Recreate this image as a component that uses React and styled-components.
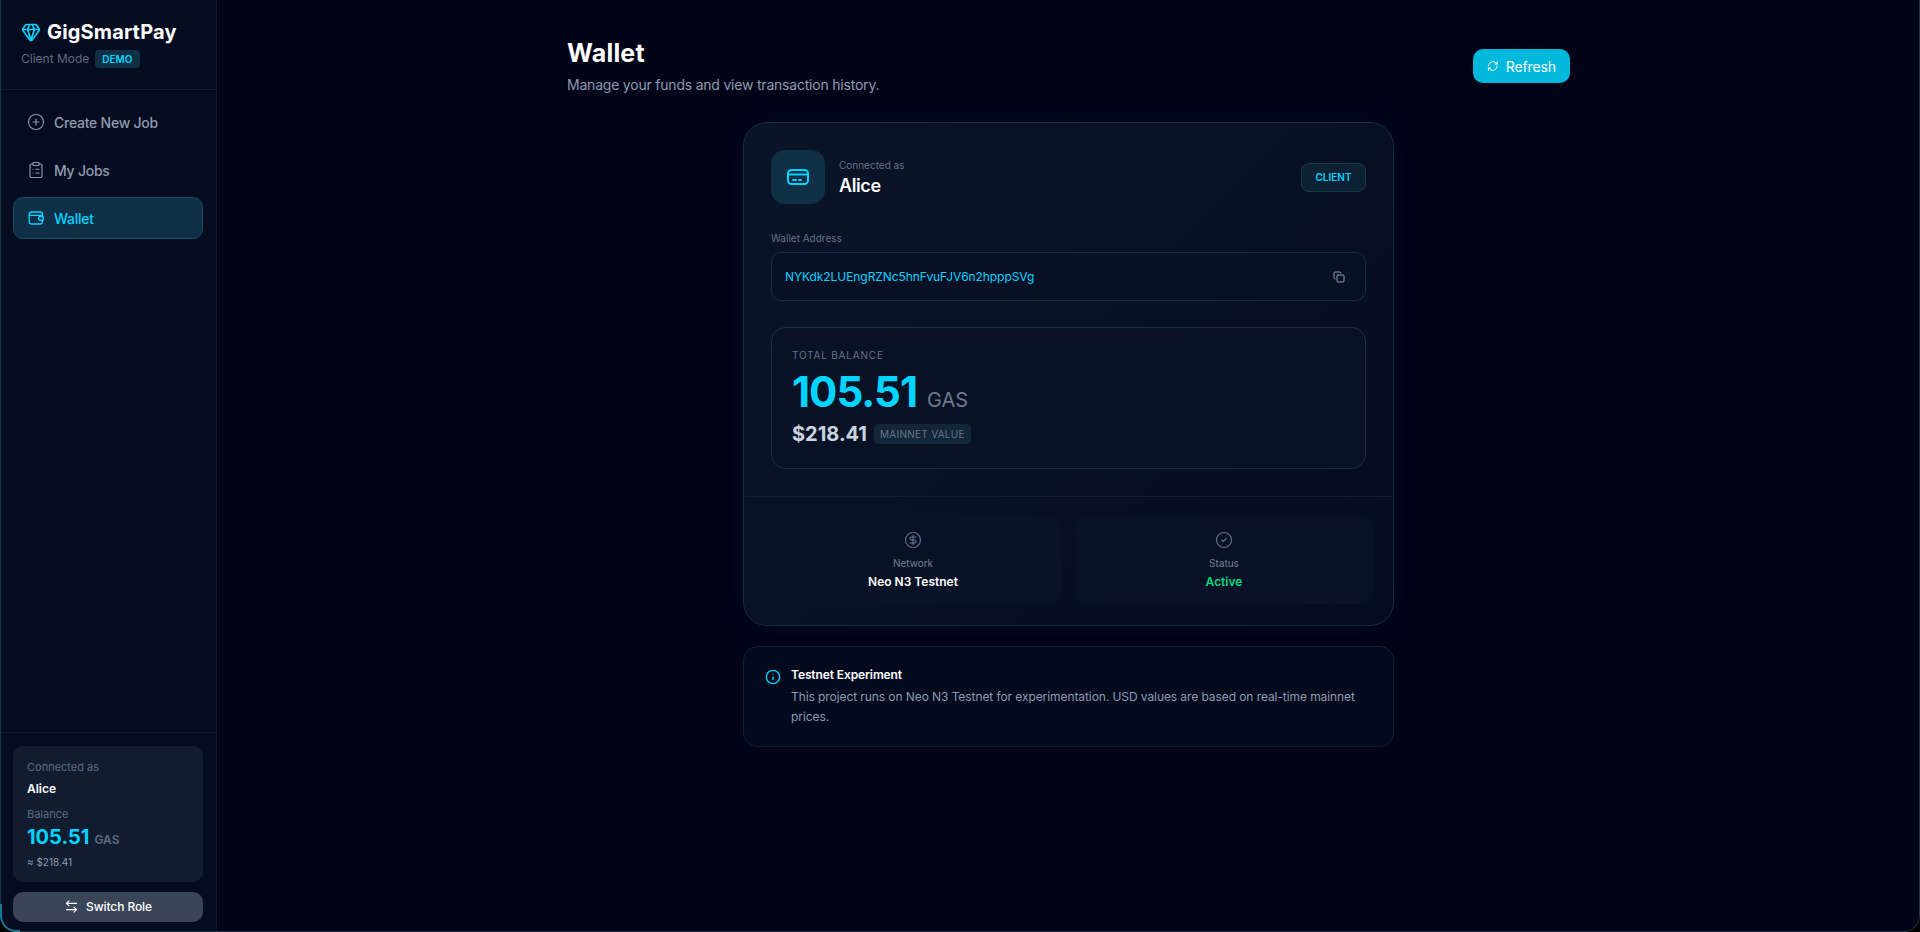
import React from "react";
import styled, { createGlobalStyle } from "styled-components";
import {
  ArrowLeftRight,
  CircleCheck,
  CircleDollarSign,
  CirclePlus,
  ClipboardList,
  Copy,
  Gem,
  Info,
  RefreshCw,
} from "lucide-react";

const GlobalStyle = createGlobalStyle`
  html, body {
    margin: 0;
    background: #000;
  }
  * {
    box-sizing: border-box;
  }
  body {
    font-family: Inter, "Liberation Sans", sans-serif;
    -webkit-font-smoothing: antialiased;
  }
`;

const Frame = styled.div`
  display: flex;
  position: relative;
  height: 932px;
  overflow: hidden;
  background: #010316;
  border-radius: 0 0 16px 16px;
  &::after {
    content: "";
    position: absolute;
    inset: 0;
    border: 1px solid #1b3347;
    border-top: 0;
    border-radius: 0 0 16px 16px;
    pointer-events: none;
  }
  &::before {
    content: "";
    position: absolute;
    left: 0;
    bottom: 0;
    width: 18px;
    height: 26px;
    border-left: 2px solid #0e7f96;
    border-bottom: 2px solid #0e7f96;
    border-bottom-left-radius: 16px;
    z-index: 1;
    pointer-events: none;
  }
`;

const Sidebar = styled.aside`
  display: flex;
  flex-direction: column;
  flex: 0 0 217px;
  background: #060c1f;
  border-right: 1px solid #0f1a2e;
`;

const Brand = styled.div`
  height: 90px;
  padding: 20px 20px 0 21px;
  border-bottom: 1px solid #121d30;
`;

const Logo = styled.div`
  display: flex;
  align-items: center;
  gap: 6px;
  color: #fff;
  font-size: 20px;
  line-height: 24px;
  font-weight: 700;
  letter-spacing: 0.15px;
  svg {
    color: #00d4ff;
  }
`;

const ModeRow = styled.div`
  display: flex;
  align-items: center;
  gap: 6px;
  margin-top: 6px;
  color: #5d6b80;
  font-size: 12px;
  line-height: 18px;
`;

const DemoTag = styled.span`
  padding: 0 7px;
  height: 18px;
  border-radius: 4px;
  background: #0f3045;
  color: #00d4ff;
  font-size: 10px;
  line-height: 18px;
  font-weight: 600;
`;

const Nav = styled.nav`
  display: flex;
  flex-direction: column;
  gap: 6px;
  flex: 1;
  padding: 11px 13px;
`;

const NavItem = styled.a`
  display: flex;
  align-items: center;
  gap: 9px;
  height: 42px;
  padding: 0 13px;
  border-radius: 10px;
  border: 1px solid ${(p) => (p.$active ? "#135067" : "transparent")};
  background: ${(p) => (p.$active ? "#0f2f46" : "transparent")};
  color: ${(p) => (p.$active ? "#00d4ff" : "#8d9bb0")};
  font-size: 14px;
  font-weight: 500;
  letter-spacing: -0.25px;
`;

const SideFoot = styled.div`
  padding: 13px 13px 10px;
  border-top: 1px solid #121d30;
`;

const AccountCard = styled.div`
  height: 136px;
  padding: 13px 14px 0;
  border-radius: 10px;
  background: #111c30;
`;

const SmallLabel = styled.div`
  color: #5d6b80;
  font-size: 11px;
  line-height: 16px;
`;

const AccountName = styled.div`
  margin: 5px 0 8px;
  color: #fff;
  font-size: 12px;
  line-height: 18px;
  font-weight: 600;
`;

const SideBalance = styled.div`
  display: flex;
  align-items: baseline;
  gap: 5px;
  margin-top: 2px;
  color: #00d4ff;
  font-size: 20px;
  line-height: 26px;
  font-weight: 700;
`;

const SideUnit = styled.span`
  color: #5d6b80;
  font-size: 12px;
  font-weight: 600;
`;

const SideUsd = styled.div`
  margin-top: 1px;
  color: #8d9bb0;
  font-size: 10px;
  line-height: 16px;
`;

const SwitchButton = styled.button`
  display: flex;
  align-items: center;
  justify-content: center;
  gap: 7px;
  width: 100%;
  height: 30px;
  margin-top: 10px;
  padding: 0 0 1px;
  border: 0;
  border-radius: 10px;
  background: #3a4658;
  color: #fff;
  font-family: inherit;
  font-size: 12px;
  font-weight: 500;
  letter-spacing: -0.1px;
`;

const Main = styled.main`
  flex: 1;
  padding-top: 37px;
`;

const Content = styled.div`
  width: 1003px;
  margin: 0 auto;
`;

const PageHead = styled.header`
  display: flex;
  justify-content: space-between;
  align-items: center;
  margin-bottom: 27px;
`;

const PageTitle = styled.h1`
  margin: 0;
  color: #fff;
  font-size: 25px;
  line-height: 32px;
  font-weight: 700;
  letter-spacing: 0.2px;
`;

const PageSub = styled.p`
  margin: 6px 0 0;
  color: #8d9bb0;
  font-size: 14px;
  line-height: 20px;
  letter-spacing: -0.21px;
`;

const RefreshButton = styled.button`
  display: flex;
  align-items: center;
  gap: 7px;
  width: 97px;
  height: 34px;
  padding: 0 14px;
  border: 0;
  border-radius: 10px;
  background: #00b8db;
  color: #fff;
  font-family: inherit;
  font-size: 14px;
  font-weight: 400;
  letter-spacing: -0.1px;
`;

const WalletCard = styled.section`
  width: 651px;
  height: 504px;
  margin: 0 auto;
  border: 1px solid #142c40;
  border-radius: 24px;
  background: linear-gradient(135deg, #0a1428 0%, #060c20 100%);
  box-shadow: 0 0 30px rgba(0, 30, 60, 0.35);
`;

const CardBody = styled.div`
  height: 374px;
  padding: 27px 27px 0;
  border-bottom: 1px solid #101d30;
`;

const CardTop = styled.div`
  display: flex;
  align-items: center;
  justify-content: space-between;
`;

const Identity = styled.div`
  display: flex;
  align-items: center;
  gap: 14px;
`;

const IconTile = styled.div`
  display: flex;
  align-items: center;
  justify-content: center;
  width: 54px;
  height: 54px;
  border-radius: 14px;
  background: #0f3045;
  color: #00d4ff;
`;

const ConnectedLabel = styled.div`
  color: #64728a;
  font-size: 10px;
  line-height: 16px;
`;

const ConnectedName = styled.div`
  margin-top: 1px;
  color: #fff;
  font-size: 18px;
  line-height: 24px;
  font-weight: 600;
  letter-spacing: -0.4px;
`;

const RoleBadge = styled.span`
  display: flex;
  align-items: center;
  justify-content: center;
  width: 65px;
  height: 29px;
  border: 1px solid #16394e;
  border-radius: 8px;
  background: #0c2234;
  color: #00d4ff;
  font-size: 10px;
  font-weight: 600;
`;

const FieldLabel = styled.div`
  margin-top: 27px;
  color: #64728a;
  font-size: 10px;
  line-height: 14px;
`;

const AddressBox = styled.div`
  display: flex;
  align-items: center;
  justify-content: space-between;
  height: 49px;
  margin-top: 7px;
  padding: 0 20px 0 13px;
  border: 1px solid #123246;
  border-radius: 10px;
  background: #071025;
  color: #00d4ff;
  font-size: 12px;
  letter-spacing: -0.07px;
  svg {
    color: #8d9bb0;
  }
`;

const BalanceBox = styled.div`
  height: 142px;
  margin-top: 26px;
  padding: 20px 20px 0;
  border: 1px solid #123246;
  border-radius: 14px;
  background: #091225;
`;

const BalanceLabel = styled.div`
  color: #64728a;
  font-size: 10px;
  line-height: 14px;
  letter-spacing: 0.8px;
`;

const BalanceRow = styled.div`
  display: flex;
  align-items: baseline;
  gap: 10px;
  margin-top: 7px;
  color: #00d4ff;
  font-size: 42px;
  line-height: 46px;
  font-weight: 700;
  letter-spacing: -1px;
`;

const BalanceUnit = styled.span`
  color: #6b7a90;
  font-size: 20px;
  line-height: 1;
  font-weight: 400;
  letter-spacing: 0;
`;

const UsdRow = styled.div`
  display: flex;
  align-items: center;
  gap: 7px;
  margin-top: 5px;
  color: #cbd5e1;
  font-size: 20px;
  line-height: 28px;
  font-weight: 700;
`;

const ValueTag = styled.span`
  padding: 0 6px;
  height: 20px;
  border-radius: 4px;
  background: #12263a;
  color: #667489;
  font-size: 10px;
  line-height: 20px;
  font-weight: 400;
  letter-spacing: 0.28px;
`;

const StatGrid = styled.div`
  display: grid;
  grid-template-columns: 1fr 1fr;
  gap: 13px;
  padding: 19px 20px 0;
`;

const Stat = styled.div`
  display: flex;
  flex-direction: column;
  align-items: center;
  height: 88px;
  padding-top: 15px;
  border-radius: 12px;
  background: #081226;
  svg {
    color: #64728a;
  }
`;

const StatLabel = styled.div`
  margin-top: 6px;
  color: #728096;
  font-size: 10px;
  line-height: 16px;
`;

const StatValue = styled.div`
  margin-top: 2px;
  color: ${(p) => p.$color};
  font-size: 12px;
  line-height: 18px;
  font-weight: 600;
`;

const Notice = styled.section`
  display: flex;
  gap: 10px;
  width: 651px;
  height: 101px;
  margin: 20px auto 0;
  padding: 19px 20px 0 21px;
  border: 1px solid #0f1f32;
  border-radius: 14px;
  background: #030a1e;
  svg {
    flex: none;
    margin-top: 3px;
    color: #00d4ff;
  }
`;

const NoticeTitle = styled.div`
  color: #fff;
  font-size: 12px;
  line-height: 18px;
  font-weight: 600;
  letter-spacing: -0.1px;
`;

const NoticeText = styled.p`
  margin: 3px 0 0;
  color: #8d9bb0;
  font-size: 12px;
  line-height: 20px;
  letter-spacing: -0.08px;
`;

// the package versions of these two don't have the dashes and clasp seen here
const CardIcon = () => (
  <svg width="24" height="24" viewBox="0 0 24 24" fill="none" stroke="currentColor" strokeWidth="2" strokeLinecap="round">
    <rect x="2" y="5" width="20" height="14" rx="3.5" />
    <path d="M2 9.5h20M7 15h3M13 15h2" />
  </svg>
);

const WalletIcon = () => (
  <svg width="18" height="18" viewBox="0 0 24 24" fill="none" stroke="currentColor" strokeWidth="1.75" strokeLinecap="round" strokeLinejoin="round">
    <path d="M20.5 9V7a3 3 0 0 0-3-3H6a3 3 0 0 0-3 3v10a3 3 0 0 0 3 3h11.5a3 3 0 0 0 3-3v-2" />
    <path d="M3 8.5h17.5" />
    <path d="M21.5 10H18a2 2 0 0 0 0 5h3.5z" />
  </svg>
);

export default function App() {
  return (
    <>
      <GlobalStyle />
      <Frame>
        <Sidebar>
          <Brand>
            <Logo>
              <Gem size={20} strokeWidth={2} />
              GigSmartPay
            </Logo>
            <ModeRow>
              Client Mode <DemoTag>DEMO</DemoTag>
            </ModeRow>
          </Brand>
          <Nav>
            <NavItem>
              <CirclePlus size={18} strokeWidth={1.5} />
              Create New Job
            </NavItem>
            <NavItem>
              <ClipboardList size={18} strokeWidth={1.5} />
              My Jobs
            </NavItem>
            <NavItem $active>
              <WalletIcon />
              Wallet
            </NavItem>
          </Nav>
          <SideFoot>
            <AccountCard>
              <SmallLabel>Connected as</SmallLabel>
              <AccountName>Alice</AccountName>
              <SmallLabel>Balance</SmallLabel>
              <SideBalance>
                105.51 <SideUnit>GAS</SideUnit>
              </SideBalance>
              <SideUsd>≈ $218.41</SideUsd>
            </AccountCard>
            <SwitchButton>
              <ArrowLeftRight size={15} strokeWidth={1.75} />
              Switch Role
            </SwitchButton>
          </SideFoot>
        </Sidebar>
        <Main>
          <Content>
            <PageHead>
              <div>
                <PageTitle>Wallet</PageTitle>
                <PageSub>Manage your funds and view transaction history.</PageSub>
              </div>
              <RefreshButton>
                <RefreshCw size={14} />
                Refresh
              </RefreshButton>
            </PageHead>
            <WalletCard>
              <CardBody>
                <CardTop>
                  <Identity>
                    <IconTile>
                      <CardIcon />
                    </IconTile>
                    <div>
                      <ConnectedLabel>Connected as</ConnectedLabel>
                      <ConnectedName>Alice</ConnectedName>
                    </div>
                  </Identity>
                  <RoleBadge>CLIENT</RoleBadge>
                </CardTop>
                <FieldLabel>Wallet Address</FieldLabel>
                <AddressBox>
                  NYKdk2LUEngRZNc5hnFvuFJV6n2hpppSVg
                  <Copy size={12} />
                </AddressBox>
                <BalanceBox>
                  <BalanceLabel>TOTAL BALANCE</BalanceLabel>
                  <BalanceRow>
                    105.51 <BalanceUnit>GAS</BalanceUnit>
                  </BalanceRow>
                  <UsdRow>
                    $218.41 <ValueTag>MAINNET VALUE</ValueTag>
                  </UsdRow>
                </BalanceBox>
              </CardBody>
              <StatGrid>
                <Stat>
                  <CircleDollarSign size={18} strokeWidth={1.5} />
                  <StatLabel>Network</StatLabel>
                  <StatValue $color="#fff">Neo N3 Testnet</StatValue>
                </Stat>
                <Stat>
                  <CircleCheck size={18} strokeWidth={1.5} />
                  <StatLabel>Status</StatLabel>
                  <StatValue $color="#00d97e">Active</StatValue>
                </Stat>
              </StatGrid>
            </WalletCard>
            <Notice>
              <Info size={16} />
              <div>
                <NoticeTitle>Testnet Experiment</NoticeTitle>
                <NoticeText>
                  This project runs on Neo N3 Testnet for experimentation. USD values are based on
                  real-time mainnet prices.
                </NoticeText>
              </div>
            </Notice>
          </Content>
        </Main>
      </Frame>
    </>
  );
}
